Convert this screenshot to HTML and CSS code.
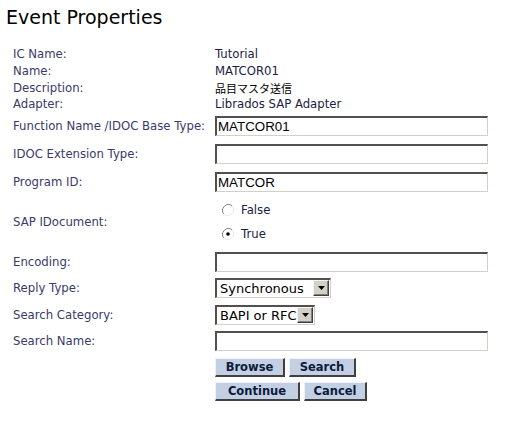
FILE: index.html
```html
<!DOCTYPE html>
<html>
<head>
<meta charset="utf-8">
<title>Event Properties</title>
<link rel="stylesheet" href="styles.css">
</head>
<body>
<h1 class="title">Event Properties</h1>
<div class="form">
  <div class="info">
    <div class="row-i"><span class="label">IC Name:</span><span class="value">Tutorial</span></div>
    <div class="row-i"><span class="label">Name:</span><span class="value">MATCOR01</span></div>
    <div class="row-i"><span class="label">Description:</span><span class="value jp">品目マスタ送信</span></div>
    <div class="row-i"><span class="label">Adapter:</span><span class="value">Librados SAP Adapter</span></div>
  </div>
  <div class="row first"><span class="label">Function Name /IDOC Base Type:</span><div class="field"><div class="input">MATCOR01</div></div></div>
  <div class="row"><span class="label">IDOC Extension Type:</span><div class="field"><div class="input"></div></div></div>
  <div class="row"><span class="label">Program ID:</span><div class="field"><div class="input">MATCOR</div></div></div>
  <div class="row radio-row"><span class="label">SAP IDocument:</span>
    <div class="field radios">
      <div class="radio"><svg width="12" height="12" viewBox="0 0 12 12"><path d="M10.2 1.8A6 6 0 0 0 1.8 10.2" fill="none" stroke="#808080" stroke-width="1"/><path d="M1.8 10.2A6 6 0 0 0 10.2 1.8" fill="none" stroke="#e8e8e8" stroke-width="1"/><circle cx="6" cy="6" r="4.6" fill="#fff"/></svg><span class="rtext">False</span></div>
      <div class="radio"><svg width="12" height="12" viewBox="0 0 12 12"><path d="M10.2 1.8A6 6 0 0 0 1.8 10.2" fill="none" stroke="#808080" stroke-width="1"/><path d="M1.8 10.2A6 6 0 0 0 10.2 1.8" fill="none" stroke="#e8e8e8" stroke-width="1"/><circle cx="6" cy="6" r="4.6" fill="#fff"/><circle cx="6" cy="6" r="1.8" fill="#000"/></svg><span class="rtext">True</span></div>
    </div>
  </div>
  <div class="row enc"><span class="label">Encoding:</span><div class="field"><div class="input"></div></div></div>
  <div class="row m6"><span class="label">Reply Type:</span><div class="field"><div class="select sel-sync"><span class="sel-text">Synchronous</span><span class="arrow"><svg width="7" height="4" viewBox="0 0 7 4"><path d="M0 0H7L3.5 4Z" fill="#000"/></svg></span></div></div></div>
  <div class="row m7"><span class="label">Search Category:</span><div class="field"><div class="select sel-bapi"><span class="sel-text">BAPI or RFC</span><span class="arrow"><svg width="7" height="4" viewBox="0 0 7 4"><path d="M0 0H7L3.5 4Z" fill="#000"/></svg></span></div></div></div>
  <div class="row m6"><span class="label">Search Name:</span><div class="field"><div class="input"></div></div></div>
  <div class="btn-row m7"><span class="label"></span><div class="buttons"><button class="btn w-browse">Browse</button><button class="btn w-search">Search</button></div></div>
  <div class="btn-row m5"><span class="label"></span><div class="buttons"><button class="btn w-continue">Continue</button><button class="btn w-cancel">Cancel</button></div></div>
</div>
</body>
</html>
```
FILE: styles.css
```css
html, body {
  margin: 0;
  padding: 0;
  background: #fff;
}
body {
  font-family: "DejaVu Sans", Verdana, sans-serif;
  font-size: 11.7px;
}
.title {
  margin: 5px 0 0 6px;
  font-size: 19px;
  line-height: 24px;
  font-weight: normal;
  color: #000;
}
.form {
  padding-left: 13px;
}
.info {
  margin-top: 17px;
}
.row-i {
  display: flex;
  height: 16.67px;
  align-items: center;
  line-height: 16px;
  overflow: visible;
}
.label {
  width: 202px;
  flex: none;
  color: #3a3a6a;
  white-space: nowrap;
}
.value {
  color: #1c1c44;
}
.value.jp {
  font-family: "Noto Sans CJK JP", sans-serif;
  color: #000;
  font-size: 11px;
  line-height: 14px;
}
.row {
  display: flex;
  align-items: center;
  height: 20px;
  margin-top: 8px;
}
.row.first {
  margin-top: 3px;
}
.field {
  display: flex;
  align-items: center;
}
.input {
  box-sizing: border-box;
  width: 273px;
  height: 20px;
  border-style: solid;
  border-width: 2px 1px 1px 2px;
  border-color: #505050 #d4d0c8 #d4d0c8 #505050;
  background: #fff;
  font-family: "Liberation Sans", Arial, sans-serif;
  font-size: 13.33px;
  line-height: 17px;
  padding-left: 1px;
  color: #000;
}
.radio-row {
  height: 48px;
  margin-top: 6px;
}
.radios {
  flex-direction: column;
  align-items: flex-start;
}
.radio {
  display: flex;
  align-items: center;
  height: 24px;
  padding-left: 7px;
}
.radio svg {
  display: block;
}
.rtext {
  margin-left: 7px;
  color: #1c1c44;
}
.row.enc {
  margin-top: 6px;
}
.row.m6 { margin-top: 6px; }
.row.m7 { margin-top: 7px; }
.select {
  box-sizing: border-box;
  height: 20px;
  display: flex;
  align-items: center;
  justify-content: space-between;
  border-style: solid;
  border-width: 2px 1px 1px 2px;
  border-color: #505050 #d4d0c8 #d4d0c8 #505050;
  background: #fff;
  padding-right: 1px;
}
.sel-sync { width: 116px; }
.sel-bapi { width: 100px; }
.sel-text {
  font-family: "DejaVu Sans", Verdana, sans-serif;
  font-size: 13px;
  color: #000;
  padding-left: 3px;
  white-space: nowrap;
}
.arrow {
  box-sizing: border-box;
  width: 16px;
  height: 16px;
  background: #d4d0c8;
  border-style: solid;
  border-width: 1px;
  border-color: #f4f4f4 #404040 #404040 #f4f4f4;
  box-shadow: inset -1px -1px 0 #808080;
  display: flex;
  align-items: center;
  justify-content: center;
}
.arrow svg { display: block; }
.btn-row {
  display: flex;
  height: 19px;
}
.btn-row.m7 { margin-top: 7px; }
.btn-row.m5 { margin-top: 5px; }
.buttons {
  display: flex;
  gap: 4px;
}
.btn {
  box-sizing: border-box;
  height: 19px;
  margin: 0;
  padding: 1px 0 0 0;
  background: #c3cfe2;
  border-style: solid;
  border-width: 1px 2px 2px 1px;
  border-color: #eef2f8 #404040 #404040 #eef2f8;
  font-family: "DejaVu Sans", Verdana, sans-serif;
  font-size: 11.5px;
  font-weight: bold;
  color: #0c1a3c;
  line-height: 15px;
}
.w-browse { width: 70px; }
.w-search { width: 67px; }
.w-continue { width: 85px; }
.w-cancel { width: 63px; }
```
